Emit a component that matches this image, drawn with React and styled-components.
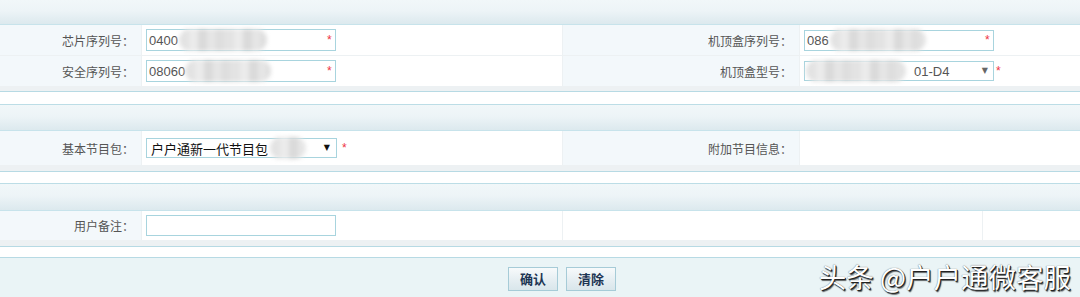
import React from 'react';
import styled, { createGlobalStyle } from 'styled-components';

const Global = createGlobalStyle`
  html, body { margin: 0; padding: 0; background: #fff; }
  body {
    font-family: "Noto Sans CJK SC", "Liberation Sans", sans-serif;
    font-size: 12px;
    color: #555;
    overflow: hidden;
  }
`;

const Page = styled.div`
  position: relative;
  width: 1080px;
  height: 297px;
  overflow: hidden;
  display: flex;
  flex-direction: column;
`;

const Section = styled.section`
  border-top: ${p => (p.$first ? 'none' : '1px solid #bcdde6')};
  border-bottom: 1px solid #b7dae4;
  margin-bottom: ${p => p.$after}px;
`;

const Header = styled.div`
  height: ${p => p.$h}px;
  border-bottom: 1px solid #c7e3eb;
  background: linear-gradient(#f1f7f9 0%, #edf4f7 45%, #dce9ee 100%);
`;

const Body = styled.div`
  display: grid;
  grid-template-columns: ${p => p.$cols};
  grid-auto-rows: ${p => p.$row}px;
  gap: 1px;
  background: #edf1f3;
  padding-bottom: ${p => p.$band}px;
`;

const Label = styled.div`
  display: flex;
  align-items: center;
  justify-content: flex-end;
  padding-right: 7px;
  background: #f3f8fb;
  color: #555;
  font-size: 12px;
  white-space: nowrap;
`;

const Value = styled.div`
  display: flex;
  align-items: center;
  padding-left: 4px;
  background: #fff;
`;

const Field = styled.div`
  box-sizing: border-box;
  width: ${p => p.$w}px;
  height: ${p => p.$h}px;
  border: 1px solid #a8d4de;
  background: #fff;
  display: flex;
  align-items: center;
  padding-left: ${p => p.$pl || 2}px;
  font-family: ${p => (p.$cjk ? '"Noto Sans CJK SC", sans-serif' : '"Liberation Sans", Arial, sans-serif')};
  font-size: 13px;
  color: ${p => (p.$dark ? '#111' : '#555')};
  overflow: visible;
  white-space: nowrap;
`;

const Redact = styled.span`
  display: inline-block;
  flex: none;
  width: ${p => p.$w}px;
  height: 22px;
  margin-left: ${p => p.$ml || 0}px;
  border-radius: 11px;
  background:
    repeating-linear-gradient(90deg, #e3e3e3 0 10px, #ebebeb 10px 19px, #dadada 19px 28px, #e6e6e6 28px 36px, #dedede 36px 45px);
  filter: blur(2px);
`;

const Arrow = styled.span`
  margin-left: auto;
  margin-right: ${p => p.$mr}px;
  font-size: 8px;
  line-height: 1;
  color: ${p => p.$c};
  font-family: "DejaVu Sans", sans-serif;
`;

const Star = styled.span`
  color: #ee3344;
  font-family: "Liberation Sans", sans-serif;
  font-size: 12px;
  margin-left: ${p => p.$ml}px;
  position: relative;
  z-index: 1;
`;

const Footer = styled.div`
  position: relative;
  flex: 1;
  border-top: 1px solid #b7dae4;
  background: #eaf4f6;
  display: flex;
  justify-content: center;
  align-items: flex-start;
  gap: 8px;
  padding: 9px 0 0 44px;
`;

const Button = styled.button`
  box-sizing: border-box;
  width: 50px;
  height: 24px;
  padding: 0;
  border: 1px solid #a6cbd7;
  background: linear-gradient(#f7fafb, #e4edf1 60%, #d9e6eb);
  font-family: "Noto Sans CJK SC", sans-serif;
  font-weight: 700;
  font-size: 13px;
  color: #1d3553;
  line-height: 22px;
`;

const Watermark = styled.div`
  position: absolute;
  right: 9px;
  top: -2px;
  font-family: "Noto Sans CJK SC", sans-serif;
  font-size: 27.5px;
  color: #fff;
  white-space: nowrap;
  text-shadow: 1px 1px 0 #222, 1.5px 1.5px 1px rgba(0,0,0,0.6), 0 0 1px #444;
`;

export default function App() {
  return (
    <>
      <Global />
      <Page>
        <Section $first $after={12}>
          <Header $h={24} />
          <Body $cols="141px 420px 236px 1fr" $row={30} $band={5}>
            <Label>芯片序列号：</Label>
            <Value>
              <Field $w={190} $h={22}>
                0400
                <Redact $w={88} $ml={1} />
              </Field>
              <Star $ml={-9}>*</Star>
            </Value>
            <Label>机顶盒序列号：</Label>
            <Value>
              <Field $w={190} $h={21}>
                086
                <Redact $w={96} $ml={1} />
              </Field>
              <Star $ml={-9}>*</Star>
            </Value>
            <Label>安全序列号：</Label>
            <Value>
              <Field $w={190} $h={22}>
                08060
                <Redact $w={86} $ml={0} />
              </Field>
              <Star $ml={-9}>*</Star>
            </Value>
            <Label>机顶盒型号：</Label>
            <Value>
              <Field $w={190} $h={20} $pl={1}>
                <Redact $w={100} />
                <span style={{ marginLeft: 8 }}>01-D4</span>
                <Arrow $mr={5} $c="#666">▼</Arrow>
              </Field>
              <Star $ml={2}>*</Star>
            </Value>
          </Body>
        </Section>

        <Section $after={11}>
          <Header $h={25} />
          <Body $cols="141px 420px 236px 1fr" $row={34} $band={6}>
            <Label>基本节目包：</Label>
            <Value>
              <Field $w={191} $h={20} $cjk $dark $pl={4}>
                户户通新一代节目包
                <Redact $w={36} $ml={2} />
                <Arrow $mr={6} $c="#111">▼</Arrow>
              </Field>
              <Star $ml={5}>*</Star>
            </Value>
            <Label>附加节目信息：</Label>
            <Value />
          </Body>
        </Section>

        <Section $after={10}>
          <Header $h={26} />
          <Body $cols="141px 420px 419px 1fr" $row={29} $band={6}>
            <Label>用户备注：</Label>
            <Value>
              <Field $w={190} $h={21} />
            </Value>
            <Value />
            <Value />
          </Body>
        </Section>

        <Footer>
          <Button>确认</Button>
          <Button>清除</Button>
          <Watermark>头条 @户户通微客服</Watermark>
        </Footer>
      </Page>
    </>
  );
}
